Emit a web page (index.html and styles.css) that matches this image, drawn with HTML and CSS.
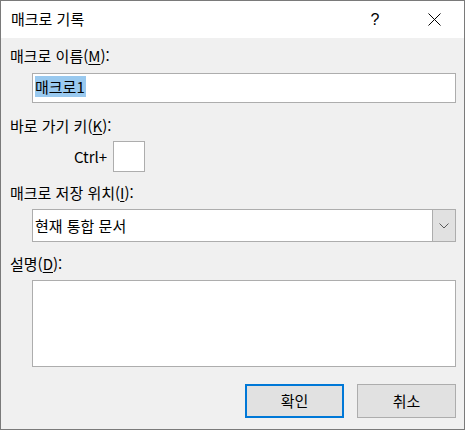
FILE: index.html
```html
<!DOCTYPE html>
<html lang="ko">
<head>
<meta charset="utf-8">
<title>매크로 기록</title>
<link rel="stylesheet" href="styles.css">
</head>
<body>
<div class="window">
  <div class="titlebar">
    <div class="title">매크로 기록</div>
    <div class="tb-help">?</div>
    <div class="tb-close">
      <svg width="13" height="13" viewBox="0 0 13 13"><path d="M0.5 0.5 L12.5 12.5 M12.5 0.5 L0.5 12.5" stroke="#000" stroke-width="1" fill="none"/></svg>
    </div>
  </div>
  <div class="content">
    <div class="label label-first">매크로 이름(<u>M</u>):</div>
    <div class="field input"><span class="sel">매크로1</span></div>

    <div class="label label-second">바로 가기 키(<u>K</u>):</div>
    <div class="ctrl-row">
      <span class="ctrl-text">Ctrl+</span>
      <div class="keybox"></div>
    </div>

    <div class="label label-third">매크로 저장 위치(<u>I</u>):</div>
    <div class="field select">
      <span class="select-text">현재 통합 문서</span>
      <div class="drop">
        <svg width="10" height="6" viewBox="0 0 10 6"><path d="M0.5 0.5 L5 5 L9.5 0.5" stroke="#5a5a5a" stroke-width="1" fill="none"/></svg>
      </div>
    </div>

    <div class="label label-fourth">설명(<u>D</u>):</div>
    <div class="field textarea"></div>

    <div class="buttons">
      <div class="btn btn-default">확인</div>
      <div class="btn">취소</div>
    </div>
  </div>
</div>
</body>
</html>
```

FILE: styles.css
```css
html, body {
  margin: 0;
  padding: 0;
  background: #f0f0f0;
}
.window {
  width: 465px;
  height: 430px;
  box-sizing: border-box;
  border: 1px solid #7a7a7a;
  background: #f0f0f0;
  font-family: "Noto Sans CJK KR", "Noto Sans", sans-serif;
  font-size: 15px;
  color: #000;
  display: flex;
  flex-direction: column;
}
.titlebar {
  height: 37px;
  background: #fff;
  display: flex;
  align-items: center;
}
.title {
  flex: 1;
  padding-left: 10px;
  line-height: 20px;
  margin-top: -1px;
}
.tb-help {
  width: 20px;
  text-align: center;
  font-family: "Liberation Sans", sans-serif;
  font-size: 16px;
  margin-right: 43px;
}
.tb-close {
  width: 13px;
  height: 13px;
  margin-right: 23px;
  display: flex;
}
.content {
  flex: 1;
  padding: 0 8px 0 9px;
  display: flex;
  flex-direction: column;
}
.label {
  line-height: 20px;
  height: 20px;
}
.label u {
  text-underline-offset: 2px;
}
.label-first { margin-top: 8px; }
.label-second { margin-top: 13px; }
.label-third { margin-top: 11px; }
.label-fourth { margin-top: 12px; }
.field {
  margin-left: 22px;
  box-sizing: border-box;
  border: 1px solid #adadad;
  background: #fff;
}
.input {
  margin-top: 7px;
  height: 30px;
  padding: 2px 0 0 2px;
}
.sel {
  display: inline-block;
  background: #99c9ef;
  line-height: 21px;
  height: 21px;
  padding-right: 1px;
}
.ctrl-row {
  margin-top: 5px;
  display: flex;
  align-items: center;
  padding-left: 64px;
}
.ctrl-text {
  line-height: 20px;
  margin-right: 6px;
}
.keybox {
  width: 32px;
  height: 31px;
  box-sizing: border-box;
  border: 1px solid #adadad;
  background: #fff;
}
.select {
  margin-top: 6px;
  height: 33px;
  display: flex;
  align-items: stretch;
}
.select-text {
  flex: 1;
  line-height: 31px;
  padding-left: 2px;
}
.drop {
  width: 22px;
  background: #e1e1e1;
  border-left: 1px solid #adadad;
  display: flex;
  align-items: center;
  justify-content: center;
}
.textarea {
  margin-top: 6px;
  height: 87px;
}
.buttons {
  margin-top: 17px;
  display: flex;
  justify-content: flex-end;
  gap: 13px;
  padding-right: 0;
}
.btn {
  width: 99px;
  height: 34px;
  box-sizing: border-box;
  border: 1px solid #adadad;
  background: #e1e1e1;
  display: flex;
  align-items: center;
  justify-content: center;
  line-height: 20px;
}
.btn-default {
  border: 2px solid #0078d7;
}
```
